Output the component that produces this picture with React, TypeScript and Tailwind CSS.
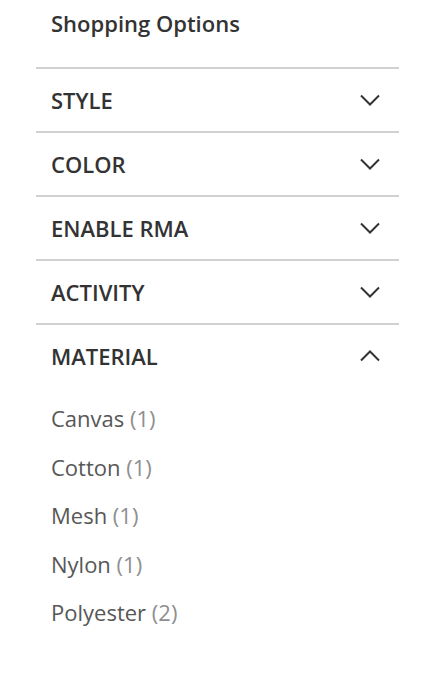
import React from 'react';

const sections = ['Style', 'Color', 'Enable RMA', 'Activity'];

const materials = [
  { name: 'Canvas', count: 1 },
  { name: 'Cotton', count: 1 },
  { name: 'Mesh', count: 1 },
  { name: 'Nylon', count: 1 },
  { name: 'Polyester', count: 2 },
];

const Chevron = ({ up }: { up?: boolean }) => (
  <svg width="22" height="12" viewBox="0 0 22 12" fill="none" className={up ? 'rotate-180' : ''}>
    <path d="M2 1.5 L11 10.5 L20 1.5" stroke="#333" strokeWidth="2" />
  </svg>
);

const App: React.FC = () => {
  return (
    <div className="min-h-screen bg-white font-['Open_Sans',sans-serif]">
      <div className="ml-9 mr-8">
        <div className="h-[67px] pl-[15px] pt-[8px] text-[22px] font-semibold leading-[30px] text-[#333]">
          Shopping Options
        </div>

        {sections.map(title => (
          <div
            key={title}
            className="flex h-[64px] items-center justify-between border-t-2 border-[#d1d1d1] pb-[1px] pl-[15px] pr-[18px]"
          >
            <span className="text-[22px] font-semibold uppercase leading-[30px] text-[#333]">{title}</span>
            <Chevron />
          </div>
        ))}

        <div className="border-t-2 border-[#d1d1d1]">
          <div className="flex h-[62px] items-center justify-between pb-[1px] pl-[15px] pr-[18px]">
            <span className="text-[22px] font-semibold uppercase leading-[30px] text-[#333]">Material</span>
            <Chevron up />
          </div>
          <ul className="pl-[15px] pt-[7px]">
            {materials.map(m => (
              <li key={m.name} className="text-[22px] leading-[48.5px] text-[#575757]">
                {m.name} <span className="text-[#8f8f8f]">({m.count})</span>
              </li>
            ))}
          </ul>
        </div>
      </div>
    </div>
  );
};

export default App;
